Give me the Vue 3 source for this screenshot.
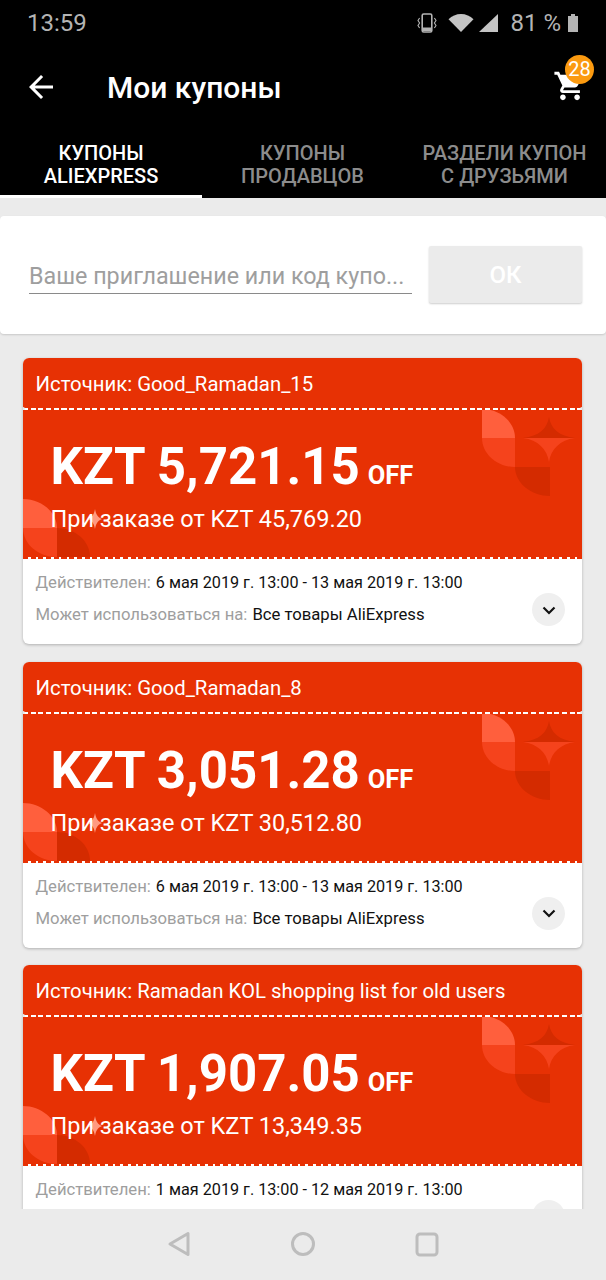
<template>
  <div class="screen">
    <header class="top">
      <div class="status">
        <span class="clock">13:59</span>
        <div class="status-right">
          <svg class="ic-vib" width="20" height="20" viewBox="0 0 20 20">
            <rect x="5.2" y="1" width="9.6" height="18" rx="1.5" fill="none" stroke="#b4b4b4" stroke-width="1.6" />
            <rect x="6" y="14.5" width="8" height="3.5" fill="#b4b4b4" />
            <path d="M2.6 5 1 7.5l1.6 2.5L1 12.500l1.600 2.500M17.400 5 19 7.500 17.400 10 19 12.500 17.400 15" fill="none" stroke="#b4b4b4" stroke-width="1.100" />
          </svg>
          <svg class="ic-wifi" width="26" height="18" viewBox="0 0 26 18">
            <path d="M.5 5.200C3.800 2 8.200 0 13 0s9.200 2 12.500 5.200L13 18z" fill="#c4c4c4" />
          </svg>
          <svg class="ic-signal" width="19" height="18" viewBox="0 0 19 18">
            <path d="M19 0v18H0z" fill="#c4c4c4" />
          </svg>
          <span class="percent">81 %</span>
          <svg class="ic-batt" width="10" height="18" viewBox="0 0 10 18">
            <path d="M3 0h4v2h3v16H0V2h3z" fill="#b4b4b4" />
          </svg>
        </div>
      </div>
      <div class="toolbar">
        <svg class="back" width="36" height="36" viewBox="0 0 24 24">
          <path d="M20 11H7.830l5.590-5.590L12 4l-8 8 8 8 1.410-1.410L7.830 13H20z" fill="#fff" />
        </svg>
        <h1 class="title">Мои купоны</h1>
        <div class="cart">
          <svg width="34" height="34" viewBox="0 0 24 24">
            <path d="M7 18c-1.100 0-1.990.9-1.990 2S5.900 22 7 22s2-.9 2-2-.9-2-2-2zM1 2v2h2l3.600 7.590-1.350 2.450c-.16.28-.25.61-.25.960 0 1.100.9 2 2 2h12v-2H7.420c-.14 0-.25-.11-.25-.25l.03-.12.9-1.630h7.450c.75 0 1.410-.41 1.750-1.030L21.700 4H5.210l-.94-2H1zm16 16c-1.100 0-1.990.9-1.990 2s.89 2 1.990 2 2-.9 2-2-.9-2-2-2z" fill="#fff" />
          </svg>
          <span class="badge">28</span>
        </div>
      </div>
      <nav class="tabs">
        <div v-for="(tab, i) in tabs" :key="i" class="tab" :class="{ active: i === 0 }">
          <span>{{ tab[0] }}</span>
          <span>{{ tab[1] }}</span>
        </div>
      </nav>
    </header>

    <main class="content">
      <section class="code-box">
        <div class="code-input">Ваше приглашение или код купо...</div>
        <button class="ok">ОК</button>
      </section>

      <article v-for="c in coupons" :key="c.source" class="coupon">
        <div class="source">Источник: {{ c.source }}</div>
        <div class="dash dash-white"></div>
        <div class="ticket">
          <svg class="deco deco-right" width="96" height="88" viewBox="0 0 96 88">
            <path d="M0 0c18 0 33 13 33 29H0z" fill="#ff5f3d" />
            <path d="M0 29h33v29C15 58 0 45 0 29z" fill="#f5431c" />
            <path d="M33 58h35v29C49 87 33 74 33 58z" fill="#d42b00" />
            <path d="M67 8c2 12 10 19 26 21H41C57 27 65 20 67 8z" fill="#d42b00" />
            <path d="M41 29h52C78 31 69 40 67 53 65 40 56 31 41 29z" fill="#f5431c" />
          </svg>
          <svg class="deco deco-left" width="80" height="58" viewBox="0 0 80 58">
            <path d="M0 0c18 0 34 13 34 29H0z" fill="#ff5f3d" />
            <path d="M0 29h34v29C15 58 0 45 0 29z" fill="#f5431c" />
            <path d="M34 29c18 0 33 13 33 29H34z" fill="#d42b00" />
            <path d="M72 10c.9 5 2.600 8.500 7 10-4.400 1.500-6.100 5-7 10-.9-5-2.600-8.500-7-10 4.400-1.500 6.100-5 7-10z" fill="#ff9a80" />
          </svg>
          <div class="amount">
            <span>{{ c.amount }}</span>
            <span class="off">OFF</span>
          </div>
          <div class="min-order">При заказе от {{ c.min }}</div>
        </div>
        <div class="dash dash-red"></div>
        <div class="details">
          <div class="row">
            <span class="label">Действителен:</span>
            <span class="value date">{{ c.dates }}</span>
          </div>
          <div class="row">
            <span class="label">Может использоваться на:</span>
            <span class="value">Все товары AliExpress</span>
          </div>
          <button class="more">
            <svg width="20" height="20" viewBox="0 0 20 20">
              <path d="M4.500 7.500 10 13l5.500-5.500" fill="none" stroke="#111" stroke-width="2.200" />
            </svg>
          </button>
        </div>
      </article>
    </main>

    <footer class="navbar">
      <svg width="24" height="26" viewBox="0 0 24 26">
        <path d="M21 2.500v21L3 13z" fill="none" stroke="#bdbdbd" stroke-width="3" stroke-linejoin="round" />
      </svg>
      <svg width="26" height="26" viewBox="0 0 26 26">
        <circle cx="13" cy="13" r="10.500" fill="none" stroke="#bdbdbd" stroke-width="3" />
      </svg>
      <svg width="24" height="26" viewBox="0 0 24 26">
        <rect x="2" y="3" width="20" height="21" rx="3" fill="none" stroke="#bdbdbd" stroke-width="3" />
      </svg>
    </footer>
  </div>
</template>

<script setup>
const tabs = [
  ['КУПОНЫ', 'ALIEXPRESS'],
  ['КУПОНЫ', 'ПРОДАВЦОВ'],
  ['РАЗДЕЛИ КУПОН', 'С ДРУЗЬЯМИ']
]

const coupons = [
  {
    source: 'Good_Ramadan_15',
    amount: 'KZT 5,721.15',
    min: 'KZT 45,769.20',
    dates: '6 мая 2019 г. 13:00 - 13 мая 2019 г. 13:00'
  },
  {
    source: 'Good_Ramadan_8',
    amount: 'KZT 3,051.28',
    min: 'KZT 30,512.80',
    dates: '6 мая 2019 г. 13:00 - 13 мая 2019 г. 13:00'
  },
  {
    source: 'Ramadan KOL shopping list for old users',
    amount: 'KZT 1,907.05',
    min: 'KZT 13,349.35',
    dates: '1 мая 2019 г. 13:00 - 12 мая 2019 г. 13:00'
  }
]
</script>

<style scoped>
.screen {
  width: 606px;
  height: 1280px;
  display: flex;
  flex-direction: column;
  overflow: hidden;
  background: #ebebeb;
  font-family: Roboto, "Liberation Sans", sans-serif;
}

.top {
  background: #000;
  flex: none;
}

.status {
  height: 46px;
  display: flex;
  align-items: center;
  justify-content: space-between;
  padding: 0 28px 0 27px;
  color: #b4b4b4;
  font-size: 24px;
}

.status-right {
  display: flex;
  align-items: center;
}

.ic-vib {
  margin-right: 11px;
}

.ic-signal {
  margin-left: 5px;
}

.percent {
  margin-left: 12px;
  margin-right: 7px;
}

.toolbar {
  height: 82px;
  display: flex;
  align-items: center;
  padding-left: 23px;
  position: relative;
}

.back {
  flex: none;
}

.title {
  margin: 0 0 0 48px;
  color: #fff;
  font-size: 30px;
  font-weight: 500;
}

.cart {
  position: absolute;
  left: 553px;
  top: 23px;
  width: 34px;
  height: 34px;
}

.badge {
  position: absolute;
  left: 12px;
  top: -14px;
  width: 29px;
  height: 29px;
  border-radius: 50%;
  background: #fb9a10;
  color: #fff;
  font-size: 20px;
  line-height: 29px;
  text-align: center;
}

.tabs {
  height: 70px;
  display: grid;
  grid-template-columns: 202px 201px 203px;
}

.tab {
  display: flex;
  flex-direction: column;
  align-items: center;
  color: #8c8c8c;
  font-size: 20px;
  font-weight: 500;
  line-height: 23px;
  padding-top: 14px;
  box-sizing: border-box;
  border-bottom: 3px solid transparent;
}

.tab.active {
  color: #fff;
  border-bottom-color: #fff;
}

.content {
  flex: 1;
  min-height: 0;
  overflow: hidden;
  padding-top: 18px;
}

.code-box {
  height: 118px;
  box-sizing: border-box;
  background: #fff;
  border-radius: 4px;
  box-shadow: 0 1px 2px rgba(0, 0, 0, 0.15);
  display: flex;
  align-items: flex-start;
  padding: 30px 24px 0 29px;
  margin-bottom: 24px;
}

.code-input {
  width: 383px;
  height: 48px;
  box-sizing: border-box;
  border-bottom: 1px solid #8a8a8a;
  color: #9e9e9e;
  font-size: 23.3px;
  line-height: 60px;
  white-space: nowrap;
}

.ok {
  margin-left: 17px;
  width: 153px;
  height: 57px;
  border: none;
  border-radius: 2px;
  background: #ebebeb;
  box-shadow: 0 1px 2px rgba(0, 0, 0, 0.2);
  color: #fff;
  font-family: inherit;
  font-size: 24px;
  font-weight: 500;
}

.coupon {
  margin: 0 24px 17.5px 23px;
  height: 286px;
  flex: none;
  border-radius: 6px;
  overflow: hidden;
  background: #fff;
  box-shadow: 0 1px 3px rgba(0, 0, 0, 0.25);
  display: flex;
  flex-direction: column;
}

.source {
  height: 50px;
  flex: none;
  box-sizing: border-box;
  background: #e73104;
  color: #fff;
  font-size: 20.35px;
  line-height: 52px;
  padding-left: 12.5px;
}

.dash {
  position: relative;
  height: 2px;
  flex: none;
}

.dash-white {
  background: repeating-linear-gradient(90deg, #fff 0 5px, #e73104 5px 7.7px);
}

.dash-white::before,
.dash-white::after {
  content: "";
  position: absolute;
  top: -1px;
  width: 4px;
  height: 4px;
  border-radius: 50%;
  background: #ebebeb;
}

.dash-white::before {
  left: -2px;
}

.dash-white::after {
  right: -2px;
}

.dash-red {
  background: repeating-linear-gradient(90deg, #e73104 0 5px, #fff 5px 7.7px);
}

.ticket {
  position: relative;
  height: 147px;
  flex: none;
  background: #e73104;
  color: #fff;
  padding: 24px 0 0 27.5px;
  box-sizing: border-box;
  overflow: hidden;
}

.deco {
  position: absolute;
}

.deco-right {
  left: 459px;
  top: -1px;
}

.deco-left {
  left: 0;
  bottom: 0;
}

.amount {
  position: relative;
  display: flex;
  align-items: baseline;
  gap: 8px;
  font-size: 51px;
  font-weight: 700;
  line-height: 66px;
  white-space: nowrap;
}

.off {
  font-size: 25.5px;
}

.min-order {
  position: relative;
  margin-top: -3px;
  font-size: 23.5px;
  line-height: 28px;
}

.details {
  position: relative;
  flex: 1;
  padding: 8px 0 0 12.5px;
  font-size: 16.7px;
}

.row {
  height: 32px;
  line-height: 32px;
  white-space: nowrap;
}

.label {
  color: #9e9e9e;
  margin-right: 5px;
}

.value {
  color: #111;
}

.date {
  font-size: 16.2px;
}

.more {
  position: absolute;
  right: 17px;
  top: 34px;
  width: 33px;
  height: 33px;
  padding: 0;
  border: none;
  border-radius: 50%;
  background: #efefef;
  display: flex;
  align-items: center;
  justify-content: center;
}

.navbar {
  height: 71px;
  flex: none;
  background: #ebebeb;
  display: flex;
  align-items: center;
  justify-content: center;
  gap: 99px;
  padding-bottom: 1px;
  box-sizing: border-box;
}
</style>
